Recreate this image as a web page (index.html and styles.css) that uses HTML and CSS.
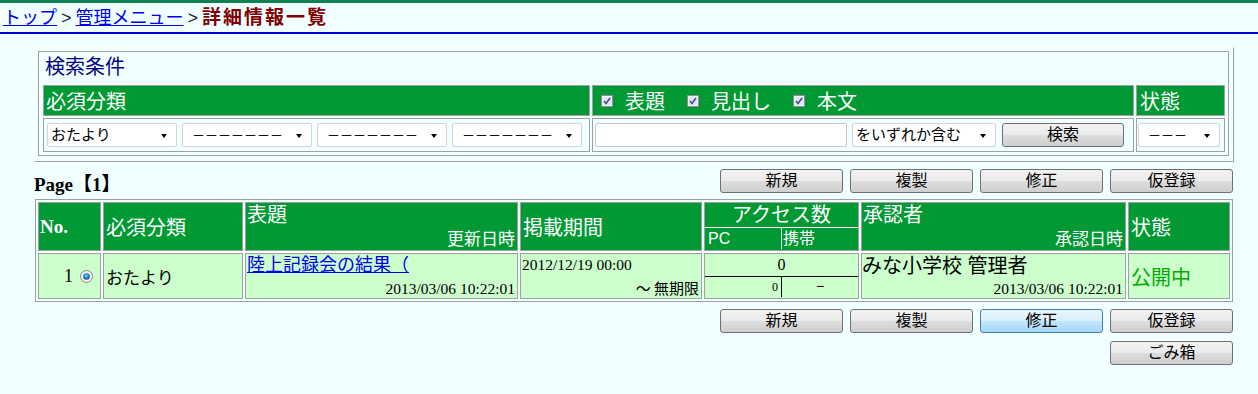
FILE: index.html
```html
<!DOCTYPE html>
<html lang="ja">
<head>
<meta charset="utf-8">
<title>詳細情報一覧</title>
<link rel="stylesheet" href="styles.css">
</head>
<body>
<div class="topline"></div>
<nav class="crumbs"><a href="#">トップ</a><span class="sep">&gt;</span><a href="#">管理メニュー</a><span class="sep">&gt;</span><span class="current">詳細情報一覧</span></nav>

<main class="main">
  <section class="search-outer">
    <div class="search-inner">
      <div class="search-title">検索条件</div>
      <table class="search-table">
        <tr class="hrow">
          <th class="c-cat">必須分類</th>
          <th class="c-check">
            <div class="checks">
              <span class="chk"><svg width="12" height="12" viewBox="0 0 12 12"><rect x="0.5" y="0.5" width="11" height="11" fill="#f4f4f4" stroke="#8f8f8f"/><rect x="2" y="2" width="8" height="8" fill="#dfe6f0" stroke="none"/><path d="M3 6 L5 8.5 L9 3" stroke="#3d4e9c" stroke-width="1.5" fill="none"/></svg>表題</span>
              <span class="chk"><svg width="12" height="12" viewBox="0 0 12 12"><rect x="0.5" y="0.5" width="11" height="11" fill="#f4f4f4" stroke="#8f8f8f"/><rect x="2" y="2" width="8" height="8" fill="#dfe6f0" stroke="none"/><path d="M3 6 L5 8.5 L9 3" stroke="#3d4e9c" stroke-width="1.5" fill="none"/></svg>見出し</span>
              <span class="chk"><svg width="12" height="12" viewBox="0 0 12 12"><rect x="0.5" y="0.5" width="11" height="11" fill="#f4f4f4" stroke="#8f8f8f"/><rect x="2" y="2" width="8" height="8" fill="#dfe6f0" stroke="none"/><path d="M3 6 L5 8.5 L9 3" stroke="#3d4e9c" stroke-width="1.5" fill="none"/></svg>本文</span>
            </div>
          </th>
          <th class="c-state">状態</th>
        </tr>
        <tr class="irow">
          <td class="c-cat">
            <div class="cell-flex pad-cat">
              <div class="sel sel-cat"><span>おたより</span><i class="arrow"></i></div>
              <div class="sel sel-cat"><span class="dash">－－－－－－－</span><i class="arrow"></i></div>
              <div class="sel sel-cat"><span class="dash">－－－－－－－</span><i class="arrow"></i></div>
              <div class="sel sel-cat"><span class="dash">－－－－－－－</span><i class="arrow"></i></div>
            </div>
          </td>
          <td class="c-check">
            <div class="cell-flex pad-check">
              <div class="text-input"></div>
              <div class="sel sel-mode"><span>をいずれか含む</span><i class="arrow"></i></div>
              <button class="btn btn-search" type="button">検索</button>
            </div>
          </td>
          <td class="c-state">
            <div class="cell-flex pad-state">
              <div class="sel sel-state"><span class="dash">－－－</span><i class="arrow"></i></div>
            </div>
          </td>
        </tr>
      </table>
    </div>
  </section>

  <div class="page-row">
    <span class="page-label">Page【1】</span>
    <div class="btn-group">
      <button class="btn" type="button">新規</button>
      <button class="btn" type="button">複製</button>
      <button class="btn" type="button">修正</button>
      <button class="btn" type="button">仮登録</button>
    </div>
  </div>

  <table class="list">
    <tr class="lhead">
      <th class="w-no no-head">No.</th>
      <th class="w-cat mid">必須分類</th>
      <th class="w-title">
        <div class="stack"><div class="t-main">表題</div><div class="t-sub">更新日時</div></div>
      </th>
      <th class="w-period mid">掲載期間</th>
      <th class="w-access">
        <div class="t-center">アクセス数</div>
        <div class="split split-head"><span class="half pc">PC</span><span class="half mob">携帯</span></div>
      </th>
      <th class="w-appr">
        <div class="stack"><div class="t-main">承認者</div><div class="t-sub">承認日時</div></div>
      </th>
      <th class="w-state mid">状態</th>
    </tr>
    <tr class="lrow">
      <td class="w-no no-cell"><span class="num">1</span><svg class="radio" width="13" height="13" viewBox="0 0 13 13"><defs><radialGradient id="rg" cx="45%" cy="40%" r="60%"><stop offset="0" stop-color="#8fd3ff"/><stop offset="0.6" stop-color="#1b7fc4"/><stop offset="1" stop-color="#0c4f86"/></radialGradient></defs><circle cx="6.5" cy="6.5" r="6" fill="#f0f0f0" stroke="#8a8a8a"/><circle cx="6.5" cy="6.5" r="3.3" fill="url(#rg)"/></svg></td>
      <td class="w-cat d-cat">おたより</td>
      <td class="w-title">
        <div class="stack"><a class="d-link" href="#">陸上記録会の結果（</a><div class="d-date">2013/03/06 10:22:01</div></div>
      </td>
      <td class="w-period">
        <div class="stack"><div class="d-start">2012/12/19 00:00</div><div class="d-end">〜 無期限</div></div>
      </td>
      <td class="w-access">
        <div class="d-total">0</div>
        <div class="split split-data"><span class="half pc"><span class="d-small">0</span></span><span class="half mob">−</span></div>
      </td>
      <td class="w-appr">
        <div class="stack"><div class="d-appr">みな小学校 管理者</div><div class="d-date">2013/03/06 10:22:01</div></div>
      </td>
      <td class="w-state d-state">公開中</td>
    </tr>
  </table>

  <div class="btn-group bottom">
    <button class="btn" type="button">新規</button>
    <button class="btn" type="button">複製</button>
    <button class="btn btn-hot" type="button">修正</button>
    <button class="btn" type="button">仮登録</button>
  </div>
  <div class="btn-group trash">
    <button class="btn" type="button">ごみ箱</button>
  </div>
</main>
</body>
</html>
```

FILE: styles.css
```css
* { box-sizing: border-box; }

body {
  margin: 0;
  background: #f0ffff;
  font-family: "Liberation Sans", "Noto Sans CJK JP", sans-serif;
  color: #000;
}

.topline {
  height: 3px;
  background: #107f52;
}

.crumbs {
  height: 31px;
  padding-left: 3px;
  border-bottom: 2px solid #0000cd;
  font-size: 18px;
  line-height: 29px;
  white-space: nowrap;
}
.crumbs a { color: #0000ee; }
.sep { color: #202040; margin: 0 4px; }
.current { color: #800000; font-weight: bold; font-size: 19px; letter-spacing: 2px; }

.main {
  width: 1234px;
  padding: 13px 0 0 34px;
}

/* ---------- search panel ---------- */
.search-outer {
  width: 1200px;
  border: 1px solid;
  border-color: #ffffff #a0a0a0 #a0a0a0 #ffffff;
  padding: 3px 4px 5px 3px;
}
.search-inner {
  border: 1px solid #a0a0a0;
  padding: 0 1px 1px 2px;
}
.search-title {
  height: 31px;
  padding-left: 4px;
  font-size: 20px;
  line-height: 31px;
  color: #000080;
}
.search-table {
  border-collapse: separate;
  border-spacing: 2px;
  table-layout: fixed;
}
.search-table th,
.search-table td {
  border: 1px solid #a0a0a0;
  padding: 0;
}
.search-table th {
  background: #009933;
  color: #fff;
  font-weight: normal;
  font-size: 20px;
  height: 31px;
  text-align: left;
  white-space: nowrap;
}
.search-table td { height: 34px; }
.search-table .c-cat { width: 547px; }
.search-table .c-check { width: 542px; }
.search-table .c-state { width: 89px; }
th.c-cat { padding-left: 2px; }
th.c-state { padding-left: 3px; }
th.c-check { padding-left: 8px; }

.checks {
  display: flex;
  align-items: center;
  gap: 22px;
}
.chk {
  display: inline-flex;
  align-items: center;
}
.chk svg { margin-right: 12px; }

.cell-flex {
  display: flex;
  align-items: center;
  height: 32px;
}
.pad-cat { padding-left: 3px; gap: 5px; }
.pad-check { padding-left: 2px; }
.pad-state { padding-left: 1px; }

.sel {
  position: relative;
  height: 24px;
  background: #fff;
  border: 1px solid #d4d4d4;
  border-radius: 2px;
  font-size: 15px;
  line-height: 22px;
  padding-left: 3px;
  white-space: nowrap;
}
.sel-cat { width: 130px; }
.sel-mode { width: 144px; margin-left: 5px; }
.sel-state { width: 82px; }
.dash { font-size: 13px; letter-spacing: 0; color: #111; padding-left: 6px; }
.arrow {
  position: absolute;
  right: 9px;
  top: 10px;
  width: 0;
  height: 0;
  border-left: 3.5px solid transparent;
  border-right: 3.5px solid transparent;
  border-top: 4px solid #000;
}
.text-input {
  width: 252px;
  height: 24px;
  background: #fff;
  border: 1px solid #c8c8c8;
  border-radius: 2px;
}

/* ---------- buttons ---------- */
.btn {
  width: 123px;
  height: 24px;
  padding: 0;
  border: 1px solid #707070;
  border-radius: 3px;
  background: linear-gradient(#f2f2f2 0%, #ebebeb 48%, #dddddd 52%, #cfcfcf 100%);
  font-family: "Liberation Sans", "Noto Sans CJK JP", sans-serif;
  font-size: 16px;
  line-height: 20px;
  color: #000;
}
.btn-hot {
  border-color: #3c7fb1;
  background: linear-gradient(#eaf6fd 0%, #d9f0fc 48%, #bee6fd 52%, #a7d9f5 100%);
}
.btn-search { width: 122px; margin-left: 6px; }

.btn-group {
  display: flex;
  gap: 7px;
  justify-content: flex-end;
}

.page-row {
  display: flex;
  justify-content: space-between;
  align-items: center;
  width: 1199px;
  height: 24px;
  margin: 7px 0 6px;
}
.page-label {
  font-family: "Liberation Serif", "Noto Sans CJK JP", serif;
  font-weight: bold;
  font-size: 19px;
  padding-top: 3px;
}

/* ---------- list table ---------- */
.list {
  margin-left: 1px;
  border: 1px solid #a0a0a0;
  border-collapse: separate;
  border-spacing: 2px;
  table-layout: fixed;
  width: 1198px;
}
.list th,
.list td {
  border: 1px solid #a0a0a0;
  padding: 0;
  text-align: left;
  font-weight: normal;
}
.list th {
  background: #009933;
  color: #fff;
  height: 49px;
  vertical-align: top;
  font-size: 20px;
}
.list td {
  background: #ccffcc;
  height: 46px;
  vertical-align: top;
}
.list .mid { vertical-align: middle; padding-left: 2px; }

.w-no { width: 63px; }
.w-cat { width: 140px; }
.w-title { width: 273px; }
.w-period { width: 182px; }
.w-access { width: 155px; }
.w-appr { width: 265px; }
.w-state { width: 102px; }

.no-head {
  vertical-align: middle !important;
  font-family: "Liberation Serif", serif;
  font-weight: bold !important;
  font-size: 19px !important;
  padding-left: 1px !important;
}

.stack {
  display: flex;
  flex-direction: column;
  justify-content: space-between;
  height: 100%;
}
.list th .stack { height: 47px; }
.list td .stack { height: 44px; }

.t-main { line-height: 24px; padding-left: 1px; }
.t-sub { font-size: 17px; line-height: 21px; text-align: right; padding-right: 2px; }
.t-center { text-align: center; line-height: 24px; }

.split {
  display: flex;
}
.split-head {
  border-top: 1px solid #fff;
  height: 22px;
  font-size: 16px;
  line-height: 21px;
}
.split .pc { width: 77px; }
.split-head .pc {
  border-right: 1px solid #fff;
  padding-left: 3px;
}
.split-head .mob { padding-left: 1px; }

.split-data {
  border-top: 1px solid #000;
  height: 21px;
}
.split-data .pc {
  border-right: 1px solid #000;
  text-align: right;
  padding-right: 3px;
}
.split-data .mob {
  flex: 1;
  text-align: center;
  font-size: 14px;
  line-height: 18px;
}
.d-small {
  font-family: "Liberation Serif", serif;
  font-size: 12px;
  line-height: 19px;
}
.d-total {
  text-align: center;
  font-family: "Liberation Serif", serif;
  font-size: 16px;
  line-height: 22px;
}

.no-cell {
  vertical-align: middle !important;
  text-align: right !important;
  padding-right: 7px !important;
}
.num {
  font-family: "Liberation Serif", serif;
  font-size: 18px;
}
.radio { margin-left: 7px; vertical-align: -1px; }

.d-cat {
  vertical-align: middle !important;
  font-size: 17px;
  padding-left: 2px !important;
}
.d-link {
  color: #0000ee;
  font-size: 18px;
  line-height: 22px;
  padding-left: 1px;
}
.d-date {
  font-family: "Liberation Serif", serif;
  font-size: 15.5px;
  line-height: 18px;
  text-align: right;
  padding-right: 2px;
}
.d-start {
  font-family: "Liberation Serif", serif;
  font-size: 15.5px;
  line-height: 22px;
  padding-left: 1px;
}
.d-end {
  font-family: "Noto Sans CJK JP", sans-serif;
  font-size: 15px;
  line-height: 20px;
  text-align: right;
  padding-right: 2px;
}
.d-appr {
  font-size: 20px;
  line-height: 24px;
}
.d-state {
  vertical-align: middle !important;
  color: #00aa00;
  font-size: 20px;
  padding-left: 2px !important;
}

.bottom { width: 1199px; margin-top: 7px; }
.trash { width: 1199px; margin-top: 8px; }
```
